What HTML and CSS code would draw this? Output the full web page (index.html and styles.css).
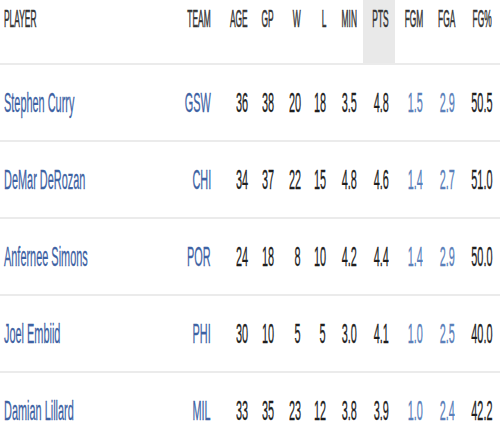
FILE: index.html
```html
<!DOCTYPE html>
<html>
<head>
<meta charset="utf-8">
<link rel="stylesheet" href="styles.css">
</head>
<body>
<div class="table">
  <div class="row head">
    <div class="c name"><span class="t">PLAYER</span></div>
    <div class="c"><span class="t">TEAM</span></div>
    <div class="c"><span class="t">AGE</span></div>
    <div class="c"><span class="t">GP</span></div>
    <div class="c"><span class="t">W</span></div>
    <div class="c"><span class="t">L</span></div>
    <div class="c"><span class="t">MIN</span></div>
    <div class="c sort"><span class="t">PTS</span></div>
    <div class="c"><span class="t">FGM</span></div>
    <div class="c"><span class="t">FGA</span></div>
    <div class="c last"><span class="t">FG%</span></div>
  </div>
  <div class="row">
    <div class="c name link"><span class="t">Stephen Curry</span></div>
    <div class="c link"><span class="t">GSW</span></div>
    <div class="c"><span class="t">36</span></div>
    <div class="c"><span class="t">38</span></div>
    <div class="c"><span class="t">20</span></div>
    <div class="c"><span class="t">18</span></div>
    <div class="c"><span class="t">3.5</span></div>
    <div class="c"><span class="t">4.8</span></div>
    <div class="c lt"><span class="t">1.5</span></div>
    <div class="c lt"><span class="t">2.9</span></div>
    <div class="c last"><span class="t">50.5</span></div>
  </div>
  <div class="row">
    <div class="c name link"><span class="t">DeMar DeRozan</span></div>
    <div class="c link"><span class="t">CHI</span></div>
    <div class="c"><span class="t">34</span></div>
    <div class="c"><span class="t">37</span></div>
    <div class="c"><span class="t">22</span></div>
    <div class="c"><span class="t">15</span></div>
    <div class="c"><span class="t">4.8</span></div>
    <div class="c"><span class="t">4.6</span></div>
    <div class="c lt"><span class="t">1.4</span></div>
    <div class="c lt"><span class="t">2.7</span></div>
    <div class="c last"><span class="t">51.0</span></div>
  </div>
  <div class="row">
    <div class="c name link"><span class="t">Anfernee Simons</span></div>
    <div class="c link"><span class="t">POR</span></div>
    <div class="c"><span class="t">24</span></div>
    <div class="c"><span class="t">18</span></div>
    <div class="c"><span class="t">8</span></div>
    <div class="c"><span class="t">10</span></div>
    <div class="c"><span class="t">4.2</span></div>
    <div class="c"><span class="t">4.4</span></div>
    <div class="c lt"><span class="t">1.4</span></div>
    <div class="c lt"><span class="t">2.9</span></div>
    <div class="c last"><span class="t">50.0</span></div>
  </div>
  <div class="row">
    <div class="c name link"><span class="t">Joel Embiid</span></div>
    <div class="c link"><span class="t">PHI</span></div>
    <div class="c"><span class="t">30</span></div>
    <div class="c"><span class="t">10</span></div>
    <div class="c"><span class="t">5</span></div>
    <div class="c"><span class="t">5</span></div>
    <div class="c"><span class="t">3.0</span></div>
    <div class="c"><span class="t">4.1</span></div>
    <div class="c lt"><span class="t">1.0</span></div>
    <div class="c lt"><span class="t">2.5</span></div>
    <div class="c last"><span class="t">40.0</span></div>
  </div>
  <div class="row">
    <div class="c name link"><span class="t">Damian Lillard</span></div>
    <div class="c link"><span class="t">MIL</span></div>
    <div class="c"><span class="t">33</span></div>
    <div class="c"><span class="t">35</span></div>
    <div class="c"><span class="t">23</span></div>
    <div class="c"><span class="t">12</span></div>
    <div class="c"><span class="t">3.8</span></div>
    <div class="c"><span class="t">3.9</span></div>
    <div class="c lt"><span class="t">1.0</span></div>
    <div class="c lt"><span class="t">2.4</span></div>
    <div class="c last"><span class="t">42.2</span></div>
  </div>
</div>
</body>
</html>
```
FILE: styles.css
```css
html, body {
  margin: 0;
  padding: 0;
  background: #ffffff;
}
body {
  font-family: "Liberation Sans", Arial, sans-serif;
  color: #1e1e1e;
  overflow: hidden;
}
.table {
  width: 500px;
}
.row {
  display: grid;
  grid-template-columns: 180px 37px 37px 26px 27px 25px 31px 32px 34px 32px 39px;
  height: 75px;
  border-bottom: 2px solid #ebebeb;
  font-size: 28px;
}
.row.head {
  height: 63px;
  font-size: 24px;
  color: #333333;
}
.c {
  display: flex;
  align-items: center;
  justify-content: flex-end;
  padding-right: 6px;
  white-space: nowrap;
  min-width: 0;
}
.head .c {
  align-items: flex-start;
  padding-top: 7px;
}
.c.last {
  padding-right: 8px;
}
.c.name {
  justify-content: flex-start;
  padding-left: 4px;
  padding-right: 0;
}
.t {
  display: inline-block;
  flex-shrink: 0;
  transform: scaleX(0.39);
  transform-origin: right center;
  line-height: 1;
  -webkit-text-stroke: 0.3px currentColor;
}
.name .t {
  transform-origin: left center;
}
.head .t {
  transform: scaleX(0.35);
  -webkit-text-stroke: 0.6px currentColor;
}
.sort {
  background: #e9e9e9;
}
.link {
  color: #3d62a3;
}
.lt {
  color: #5a7fba;
}
```
